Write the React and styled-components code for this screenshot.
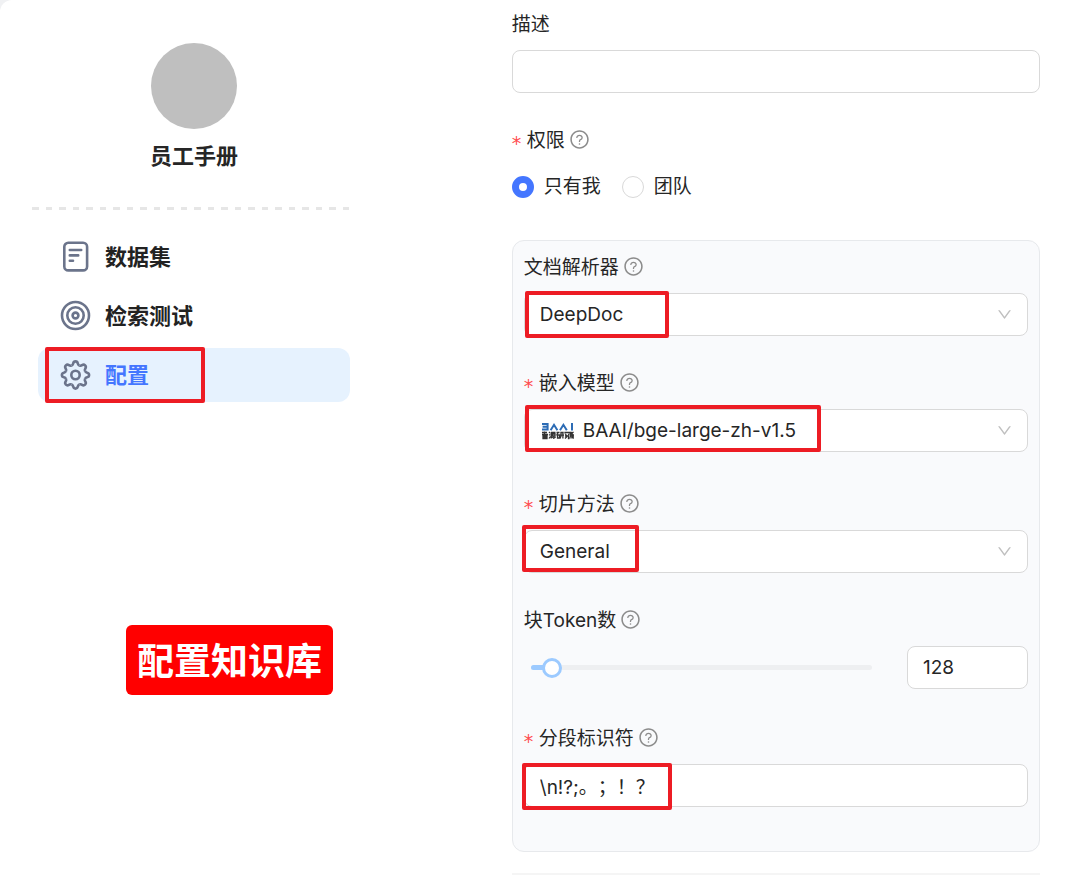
import { useId, useState } from 'react'
import styled, { createGlobalStyle } from 'styled-components'
import { AiOutlineDown, AiOutlineQuestionCircle } from 'react-icons/ai'

const GlobalStyle = createGlobalStyle`
	* {
		box-sizing: border-box;
	}

	body {
		margin: 0;
		background: #f0f1f3;
		color: #262626;
		font-family: Inter, 'Noto Sans CJK SC', sans-serif;
		font-size: 19px;
		text-spacing-trim: space-all;
	}

	input,
	select {
		margin: 0;
		color: inherit;
		font: inherit;
	}
`

const Page = styled.div`
	display: grid;
	grid-template-columns: 36fr 64fr;
	min-height: 100vh;
	border-top-left-radius: 12px;
	background: #ffffff;
`

const Sidebar = styled.aside`
	display: flex;
	flex-direction: column;
	padding: 43px 39px 0 32px;
`

const Profile = styled.div`
	display: flex;
	flex-direction: column;
	align-items: center;
	gap: 11px;
	padding: 0 0 35px 6px;
`

const Avatar = styled.div`
	width: 86px;
	height: 86px;
	border-radius: 50%;
	background: #bfbfbf;
`

const Title = styled.h1`
	margin: 0;
	font-size: 22px;
	font-weight: 700;
	line-height: 32px;
`

const Divider = styled.div`
	height: 3px;
	background: repeating-linear-gradient(
		90deg,
		#e6e6e6 0 7px,
		transparent 7px 14px,
		#e6e6e6 14px 20px,
		transparent 20px 27px
	);
`

const Menu = styled.nav`
	display: flex;
	flex-direction: column;
	gap: 5px;
	padding: 20px 0 0 6px;
`

const MenuLink = styled.a`
	position: relative;
	display: flex;
	align-items: center;
	gap: 14px;
	height: 54px;
	padding-left: 22px;
	border-radius: 12px;
	background: ${({ $active }) => ($active ? '#e6f2fe' : 'transparent')};
	color: ${({ $active }) => ($active ? '#4476ff' : '#222222')};
	font-size: 22px;
	font-weight: 700;
	text-decoration: none;

	svg {
		flex: none;
		color: #6b748b;
	}
`

const MenuText = styled.span`
	padding-bottom: 5px;
`

const Marker = styled.span`
	position: absolute;
	top: ${({ $top }) => $top}px;
	left: ${({ $left }) => $left}px;
	width: ${({ $width }) => $width}px;
	height: ${({ $height }) => $height}px;
	border: 4px solid #ed1c24;
	border-radius: 2px;
	pointer-events: none;
`

const Caption = styled.strong`
	align-self: center;
	margin: 223px 0 0 77px;
	padding: 9px 11px 5px;
	border-radius: 6px;
	background: #ff0000;
	color: #ffffff;
	font-size: 37px;
	font-weight: 700;
	line-height: 56px;
	white-space: nowrap;
`

const Form = styled.form`
	padding: 9px 40px 0 123px;
`

const Field = styled.div`
	padding-bottom: ${({ $after = 32 }) => $after}px;
`

const LabelRow = styled.div`
	display: flex;
	align-items: center;
	height: 28px;
	margin-bottom: 13px;

	svg {
		margin-left: 4px;
		color: #8c8c8c;
	}
`

const LabelText = styled.label`
	padding-bottom: 2px;
`

const Required = styled.span`
	width: 15px;
	padding-top: 7px;
	color: #ff4d4f;
	font-family: 'DejaVu Sans', sans-serif;
	line-height: 24px;
`

const Control = styled.div`
	position: relative;
	display: flex;
	align-items: center;
	height: 43px;
	padding: 0 14px 0 15px;
	border: 1px solid #d9d9d9;
	border-radius: 8px;
	background: #ffffff;

	> svg {
		flex: none;
		color: #bfbfbf;
	}
`

const TextInput = styled.input`
	flex: 1;
	min-width: 0;
	padding: 0;
	border: none;
	outline: none;
	background: transparent;
`

const Select = styled.select`
	flex: 1;
	min-width: 0;
	padding: 0;
	border: none;
	outline: none;
	background: transparent;
	appearance: none;
`

const Radios = styled.div`
	display: flex;
	gap: 21px;
`

const RadioLabel = styled.label`
	display: flex;
	align-items: center;
	gap: 10px;
	line-height: 42px;
`

const Radio = styled.input`
	width: 22px;
	height: 22px;
	border: 1px solid #d9d9d9;
	border-radius: 50%;
	background: #ffffff;
	appearance: none;

	&:checked {
		border: 7px solid #4476ff;
	}
`

const Card = styled.section`
	padding: 11px 11px 12px;
	border: 1px solid #e7e9ec;
	border-radius: 12px;
	background: #f9fafc;
`

const SliderRow = styled.div`
	display: flex;
	align-items: center;
	gap: 28px;
`

const Rail = styled.div`
	position: relative;
	display: flex;
	flex: 1;
	align-items: center;
	height: 5px;
	margin: 0 7px;
	border-radius: 3px;
	background: #eeeff1;
`

const RailFill = styled.div`
	height: 5px;
	border-radius: 3px;
	background: #9ccaff;
`

// The thumb is centred on the rail's ends, so the input hangs over them
const Range = styled.input`
	position: absolute;
	left: -10px;
	width: calc(100% + 20px);
	height: 20px;
	background: transparent;
	appearance: none;

	&::-webkit-slider-thumb {
		width: 20px;
		height: 20px;
		border: 3px solid #9ccaff;
		border-radius: 50%;
		background: #ffffff;
		appearance: none;
	}
`

const NumberBox = styled(Control)`
	width: 121px;
`

const Separator = styled.hr`
	height: 2px;
	margin: 21px 0 0;
	border: none;
	background: #f5f5f5;
`

const LogoSvg = styled.svg`
	margin: 1px 9px 0 1px;
`

const DatasetIcon = () => (
	<svg width="31" height="32" viewBox="0 0 31 32" fill="none" stroke="currentColor" strokeWidth="2.6" strokeLinecap="round">
		<rect x="4.3" y="1.8" width="22.8" height="27.6" rx="4" />
		<path d="M9.8 9h11.4M9.8 14.4h8.4M9.8 19.8h3.2" />
	</svg>
)

const TargetIcon = () => (
	<svg width="31" height="32" viewBox="0 0 31 32" fill="none" stroke="currentColor" strokeWidth="2.6">
		<circle cx="15.5" cy="15.5" r="13.5" />
		<circle cx="15.5" cy="15.5" r="8.2" />
		<circle cx="15.5" cy="15.5" r="2.9" />
	</svg>
)

const GearIcon = () => (
	<svg width="31" height="32" viewBox="0 0 31 32" fill="none" stroke="currentColor" strokeWidth="2.6" strokeLinejoin="round">
		<circle cx="15.5" cy="16" r="4.2" />
		{[0, 45, 90, 135, 180, 225, 270, 315].map(angle => (
			<path
				key={angle}
				transform={`rotate(${angle} 15.5 16)`}
				d="M11.56 6.48C12.6 6.05 13 5.4 13.2 4.4C13.5 2.9 14.3 2.4 15.5 2.4S17.5 2.9 17.8 4.4C18 5.4 18.4 6.05 19.44 6.48"
			/>
		))}
	</svg>
)

const BaaiLogo = () => (
	<LogoSvg width="33" height="18" viewBox="0 0 33 18" fill="none">
		<g stroke="#2d6cb5" strokeWidth="2">
			<path d="M1 2h5.6v5.4H1M1.6 4.7h5M9.6 8.2l3.4-5.4 3.4 5.4M19 8.2l3.4-5.4 3.4 5.4M31 1v7.4" />
		</g>
		<g stroke="#333333" strokeWidth="1.3">
			<path d="M1 10.5h5M3.5 9.5v3M1 12.5h6M2 14h4v2.5H2zM2 15.2h4" />
			<path d="M8 10l1 1M8 12.5l1 .8M8 16.5l1.4-2M10 10.5h4.5M10.2 10.5v6M11.5 12h2.5v2h-2.5zM12.8 14v3M11 16l.6-1M14.4 16l-.6-1" />
			<path d="M15.5 10.5h3M17 10.5l-1.4 3M16.5 13h2v3h-2zM19.3 10.5h3.4M19 13.2h4M20 10.5v3.5l-1 2.5M21.9 10.5v6" />
			<path d="M24 11.5v-1h4.5v1M25.3 12l-1 1M27.2 12l1 1M24 14h3.5v2.5h1M25.6 13v2l-1.6 1.5" />
			<path d="M29 10.5h1.8M29.3 10.5v4l-.5 2M29.3 12h1.5v2h-1.5M32.6 10.2l-1.4.6v3.6l-.6 2M31.2 12.8h1.8M32.2 13v3.8" />
		</g>
	</LogoSvg>
)

const FieldLabel = ({ htmlFor, id, required, help = true, children }) => (
	<LabelRow>
		{required && <Required>*</Required>}
		<LabelText as={htmlFor ? 'label' : 'span'} htmlFor={htmlFor} id={id}>
			{children}
		</LabelText>
		{help && <AiOutlineQuestionCircle size={21} />}
	</LabelRow>
)

const SelectField = ({ label, required, value, logo, after, marker }) => {
	const id = useId()

	return (
		<Field $after={after}>
			<FieldLabel htmlFor={id} required={required}>
				{label}
			</FieldLabel>
			<Control>
				{logo}
				<Select id={id} defaultValue={value}>
					<option>{value}</option>
				</Select>
				<AiOutlineDown size={17} />
				<Marker {...marker} />
			</Control>
		</Field>
	)
}

const MENU = [
	{ name: '数据集', Icon: DatasetIcon },
	{ name: '检索测试', Icon: TargetIcon },
	{ name: '配置', Icon: GearIcon, active: true },
]

const MAX_TOKENS = 2048

const App = () => {
	const [access, setAccess] = useState('me')
	const [tokens, setTokens] = useState(128)
	const [delimiter, setDelimiter] = useState('\\n!?;。；！？')

	const onTokensChange = ({ target }) => setTokens(Number(target.value))

	return (
		<>
			<GlobalStyle />
			<Page>
				<Sidebar>
					<Profile>
						<Avatar />
						<Title>员工手册</Title>
					</Profile>
					<Divider />
					<Menu>
						{MENU.map(({ name, Icon, active }) => (
							<MenuLink key={name} href="#" $active={active}>
								<Icon />
								<MenuText>{name}</MenuText>
								{active && <Marker $top={-1} $left={7} $width={160} $height={56} />}
							</MenuLink>
						))}
					</Menu>
					<Caption>配置知识库</Caption>
				</Sidebar>
				<Form>
					<Field>
						<FieldLabel htmlFor="description" help={false}>
							描述
						</FieldLabel>
						<Control>
							<TextInput id="description" />
						</Control>
					</Field>
					<Field>
						<FieldLabel id="access" required>
							权限
						</FieldLabel>
						<Radios role="radiogroup" aria-labelledby="access">
							<RadioLabel>
								<Radio
									type="radio"
									name="access"
									checked={access === 'me'}
									onChange={() => setAccess('me')}
								/>
								只有我
							</RadioLabel>
							<RadioLabel>
								<Radio
									type="radio"
									name="access"
									checked={access === 'team'}
									onChange={() => setAccess('team')}
								/>
								团队
							</RadioLabel>
						</Radios>
					</Field>
					<Card>
						<SelectField
							label="文档解析器"
							value="DeepDoc"
							marker={{ $top: -3, $left: 0, $width: 144, $height: 47 }}
						/>
						<SelectField
							label="嵌入模型"
							required
							value="BAAI/bge-large-zh-v1.5"
							logo={<BaaiLogo />}
							after={37}
							marker={{ $top: -5, $left: 0, $width: 296, $height: 47 }}
						/>
						<SelectField
							label="切片方法"
							required
							value="General"
							marker={{ $top: -6, $left: -3, $width: 117, $height: 47 }}
						/>
						<Field $after={34}>
							<FieldLabel htmlFor="tokens">块Token数</FieldLabel>
							<SliderRow>
								<Rail>
									<RailFill style={{ width: `${(tokens / MAX_TOKENS) * 100}%` }} />
									<Range
										type="range"
										id="tokens"
										max={MAX_TOKENS}
										value={tokens}
										onChange={onTokensChange}
									/>
								</Rail>
								<NumberBox>
									<TextInput aria-label="块Token数" value={tokens} onChange={onTokensChange} />
								</NumberBox>
							</SliderRow>
						</Field>
						<Field>
							<FieldLabel htmlFor="delimiter" required>
								分段标识符
							</FieldLabel>
							<Control>
								<TextInput
									id="delimiter"
									value={delimiter}
									onChange={({ target }) => setDelimiter(target.value)}
								/>
								<Marker $top={-2} $left={-3} $width={150} $height={47} />
							</Control>
						</Field>
					</Card>
					<Separator />
				</Form>
			</Page>
		</>
	)
}

export default App
